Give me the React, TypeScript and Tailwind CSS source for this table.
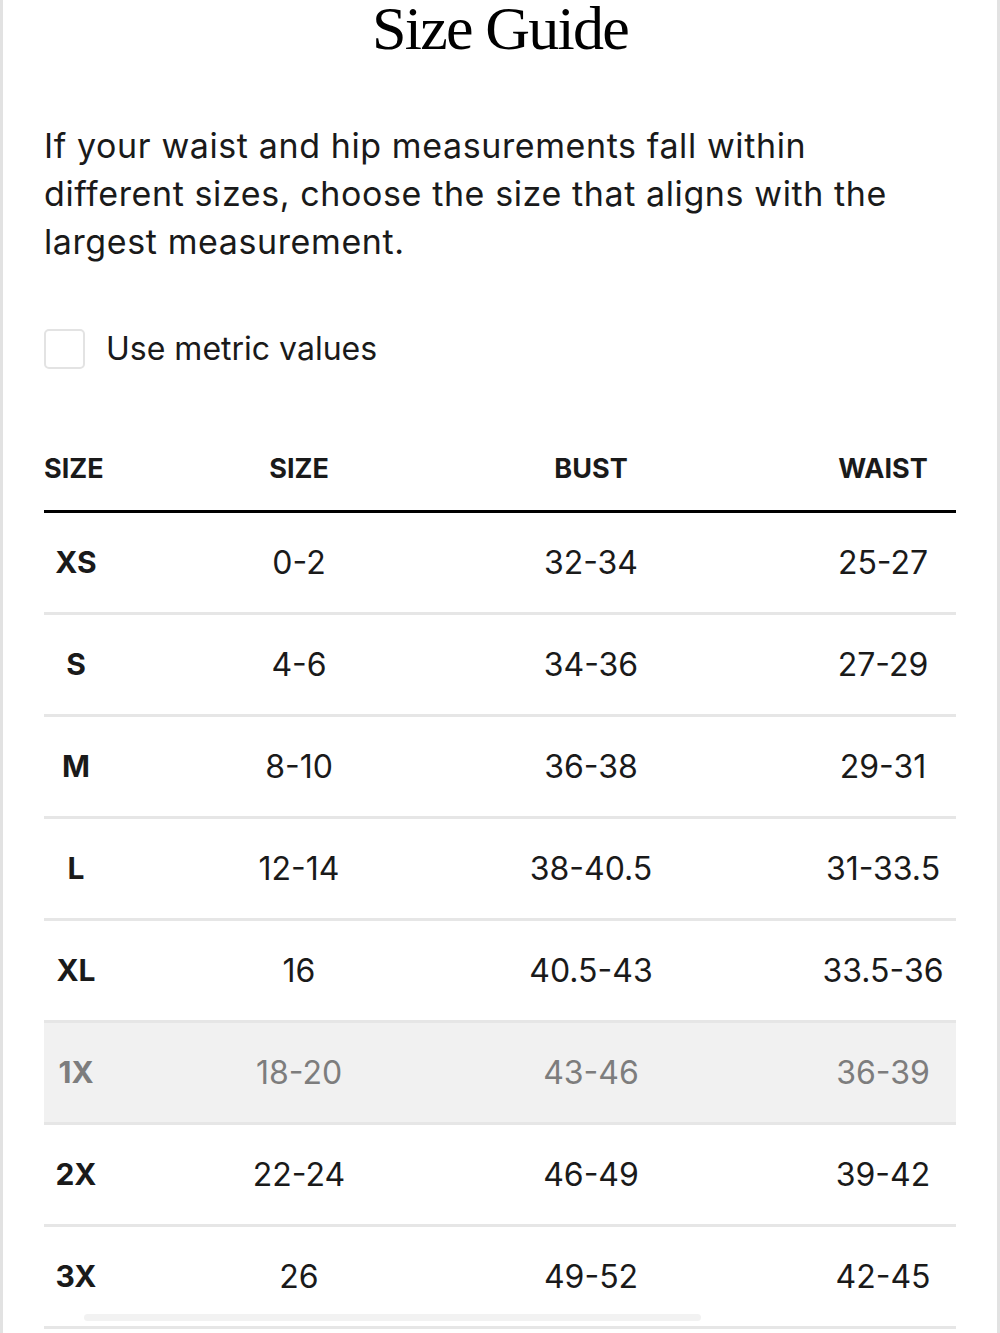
const rows = [
  { size: "XS", num: "0-2", bust: "32-34", waist: "25-27" },
  { size: "S", num: "4-6", bust: "34-36", waist: "27-29" },
  { size: "M", num: "8-10", bust: "36-38", waist: "29-31" },
  { size: "L", num: "12-14", bust: "38-40.5", waist: "31-33.5" },
  { size: "XL", num: "16", bust: "40.5-43", waist: "33.5-36" },
  { size: "1X", num: "18-20", bust: "43-46", waist: "36-39", muted: true },
  { size: "2X", num: "22-24", bust: "46-49", waist: "39-42" },
  { size: "3X", num: "26", bust: "49-52", waist: "42-45" },
];

const sans = "font-['Inter','Liberation_Sans',Arial,sans-serif]";

export default function App() {
  return (
    <div className="min-h-[1333px] w-[1000px] bg-white border-x-[3px] border-[#e2e2e2] text-[#1a1a1a]">
      <div className="px-[41px]">
        <h1 className="text-center font-['Liberation_Serif','Times_New_Roman',serif] text-[62px] leading-[56px] tracking-[-1.8px] text-black">
          Size Guide
        </h1>

        <p className={`${sans} mt-[66px] text-[34px] leading-[48px] tracking-[0.6px]`}>
          If your waist and hip measurements fall within
          <br />
          different sizes, choose the size that aligns with the
          <br />
          largest measurement.
        </p>

        <label className={`${sans} mt-[59px] flex items-center gap-[21px] text-[32px]`}>
          <span className="h-[40px] w-[41px] rounded-[5px] border-2 border-[#e3e3e3] bg-white" />
          <span>Use metric values</span>
        </label>

        <div className={`${sans} relative mt-[55px]`}>
          <div className="grid h-[85px] grid-cols-[64px_382px_202px_264px] items-center border-b-[3px] border-black text-[27px] font-bold">
            <div className="text-left">SIZE</div>
            <div className="text-center">SIZE</div>
            <div className="text-center">BUST</div>
            <div className="pl-[118px] text-center">WAIST</div>
          </div>

          {rows.map((r) => (
            <div
              key={r.size}
              className={`grid h-[102px] grid-cols-[64px_382px_202px_264px] items-center border-b-[3px] border-[#e6e6e6] text-[32px] ${
                r.muted ? "bg-[#f1f1f1] text-[#7d7d7d]" : ""
              }`}
            >
              <div className="text-center text-[30px] font-bold">{r.size}</div>
              <div className="text-center">{r.num}</div>
              <div className="text-center">{r.bust}</div>
              <div className="pl-[118px] text-center">{r.waist}</div>
            </div>
          ))}

          <div className="absolute bottom-[8px] left-[40px] h-[7px] w-[617px] rounded-full bg-[#f2f2f2]" />
        </div>
      </div>
    </div>
  );
}
